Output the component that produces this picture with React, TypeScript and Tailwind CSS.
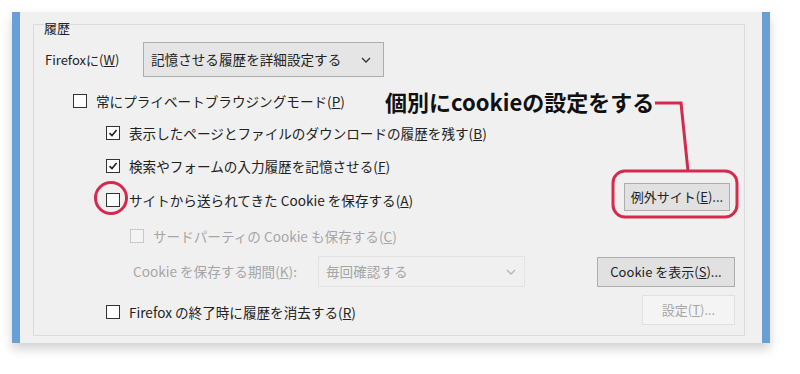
import React from 'react';

const FONT = { fontFamily: '"Noto Sans CJK JP", "Noto Sans", sans-serif' };

function Box({ checked = false, disabled = false }: { checked?: boolean; disabled?: boolean }) {
  return (
    <span
      className={`flex h-[14px] w-[14px] shrink-0 items-center justify-center border ${
        disabled ? 'border-[#c8c8c8] bg-[#f4f4f4]' : 'border-[#333] bg-white'
      }`}
    >
      {checked && (
        <svg width="10" height="10" viewBox="0 0 10 10">
          <path d="M1.5 5.2 L4 7.6 L8.6 2" fill="none" stroke="#222" strokeWidth="1.6" />
        </svg>
      )}
    </span>
  );
}

function Chevron({ color }: { color: string }) {
  return (
    <svg width="10" height="6" viewBox="0 0 10 6">
      <path d="M1 1 L5 5 L9 1" fill="none" stroke={color} strokeWidth="1.3" />
    </svg>
  );
}

function Key({ k }: { k: string }) {
  return (
    <span>
      (<span className="underline">{k}</span>)
    </span>
  );
}

export default function App() {
  return (
    <div className="relative h-[374px] w-[800px] overflow-hidden bg-white text-[13.6px] text-[#222]" style={FONT}>
      <div className="pl-[12px] pt-[12px]">
        {/* dialog frame */}
        <div className="flex h-[331px] w-[758px] border-x-[8px] border-[#6a9fd6] bg-[#f0f0f0] shadow-[0_6px_10px_rgba(0,0,0,0.18)]">
          <div className="ml-[13px] mr-[17px] mt-[12px] mb-[7px] flex flex-1 flex-col border border-[#dcdcdc]">
            <div className="-mt-[4px] pl-[10px] text-[13px] leading-[14px]">履歴</div>

            <div className="mt-[7px] flex h-[35px] items-center pl-[11px]">
              <span className="w-[98px] text-[13px]">
                Firefoxに<Key k="W" />
              </span>
              <div className="flex h-[35px] w-[241px] items-center justify-between border border-[#adadad] bg-[#e5e5e5] pl-[7px] pr-[12px]">
                <span>記憶させる履歴を詳細設定する</span>
                <Chevron color="#333" />
              </div>
            </div>

            <div className="mt-[7px] flex h-[34px] items-center gap-[9px] pl-[39px]">
              <Box />
              <span>
                常にプライベートブラウジングモード<Key k="P" />
              </span>
            </div>

            <div className="flex h-[30px] items-center gap-[9px] pl-[72px]">
              <Box checked />
              <span>
                表示したページとファイルのダウンロードの履歴を残す<Key k="B" />
              </span>
            </div>

            <div className="flex h-[36px] items-center gap-[9px] pl-[72px]">
              <Box checked />
              <span>
                検索やフォームの入力履歴を記憶させる<Key k="F" />
              </span>
            </div>

            <div className="flex h-[32px] items-center gap-[9px] pl-[72px] pr-[14px]">
              <Box />
              <span>
                サイトから送られてきた Cookie を保存する<Key k="A" />
              </span>
              <button className="mb-[6px] ml-auto h-[28px] w-[106px] border border-[#adadad] bg-[#e1e1e1] text-[13px]">
                例外サイト<Key k="E" />...
              </button>
            </div>

            <div className="flex h-[40px] items-center gap-[9px] pl-[96px] text-[#a6a6a6]">
              <Box disabled />
              <span>
                サードパーティの Cookie も保存する<Key k="C" />
              </span>
            </div>

            <div className="flex h-[31px] items-center pl-[99px] pr-[9px]">
              <span className="w-[185px] text-[#a6a6a6]">
                Cookie を保存する期間<Key k="K" />:
              </span>
              <div className="flex h-[31px] w-[207px] items-center justify-between border border-[#e3e3e3] bg-[#f0f0f0] pl-[7px] pr-[8px] text-[#a6a6a6]">
                <span>毎回確認する</span>
                <Chevron color="#b5b5b5" />
              </div>
              <button className="ml-auto h-[30px] w-[138px] border border-[#adadad] bg-[#e1e1e1] text-[13px]">
                Cookie を表示<Key k="S" />...
              </button>
            </div>

            <div className="mt-[6px] flex h-[38px] items-center gap-[9px] pl-[72px] pr-[9px]">
              <Box />
              <span>
                Firefox の終了時に履歴を消去する<Key k="R" />
              </span>
              <button className="ml-auto mb-[4px] h-[30px] w-[93px] border border-[#e0e0e0] bg-[#f4f4f4] text-[13px] text-[#a6a6a6]">
                設定<Key k="T" />...
              </button>
            </div>
          </div>
        </div>
      </div>

      {/* annotation */}
      <div className="absolute left-[385px] top-[87px] text-[22px] font-bold leading-[28px] text-[#111]">
        個別にcookieの設定をする
      </div>
      <svg className="absolute left-0 top-0" width="800" height="374" viewBox="0 0 800 374">
        <path d="M655 103 L681 103 L688 171" fill="none" stroke="#d52a4d" strokeWidth="3" />
        <rect x="613" y="171" width="124" height="46" rx="12" fill="none" stroke="#d52a4d" strokeWidth="3" />
        <circle cx="111" cy="198" r="15.5" fill="none" stroke="#d52a4d" strokeWidth="3" />
      </svg>
    </div>
  );
}
